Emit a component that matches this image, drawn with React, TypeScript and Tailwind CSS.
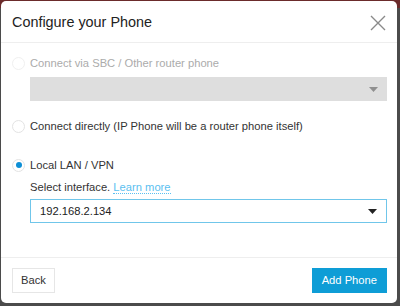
import { useState } from 'react';

const options = [
  { id: 'sbc', label: 'Connect via SBC / Other router phone', disabled: true },
  { id: 'direct', label: 'Connect directly (IP Phone will be a router phone itself)', disabled: false },
  { id: 'lan', label: 'Local LAN / VPN', disabled: false },
];

function Radio({ checked, disabled }: { checked: boolean; disabled?: boolean }) {
  return (
    <span
      className={`flex h-[13px] w-[13px] shrink-0 items-center justify-center rounded-full border ${
        disabled ? 'border-[#f0f0f0] bg-white' : 'border-[#e3e3e3] bg-white'
      }`}
    >
      {checked && <span className="h-[6px] w-[6px] rounded-full bg-[#0d8fd6]" />}
    </span>
  );
}

function Caret({ color }: { color: string }) {
  return (
    <svg width="9" height="5" viewBox="0 0 9 5" aria-hidden="true">
      <path d="M0 0h9L4.5 5z" fill={color} />
    </svg>
  );
}

export default function App() {
  const [mode, setMode] = useState('lan');

  return (
    <div className="flex h-[306px] w-[400px] flex-col bg-[linear-gradient(#6b2b2b_0,#6b2b2b_8px,#4b4b4b_8px)] pb-[3px] pl-[1px] pr-[3px] pt-[1px] font-['Liberation_Sans',Arial,sans-serif]">
      <div className="flex flex-1 flex-col rounded-[5px] bg-white">
        {/* Header */}
        <div className="flex h-[42px] items-center justify-between border-b border-[#eeeeee] pl-[11px] pr-[10px] pt-[2px]">
          <h1 className="text-[14.4px] leading-none text-[#222]">Configure your Phone</h1>
          <button className="flex h-[18px] w-[18px] items-center justify-center" aria-label="Close">
            <svg width="16" height="16" viewBox="0 0 16 16" aria-hidden="true">
              <path d="M1 1L15 15M15 1L1 15" stroke="#8a8a8a" strokeWidth="1.4" />
            </svg>
          </button>
        </div>

        {/* Body */}
        <div className="flex flex-1 flex-col pl-[11px] pr-[10px] pt-[12px] text-[11.2px] leading-[16px]">
          <label className="flex items-center gap-[5px]">
            <Radio checked={mode === 'sbc'} disabled />
            <span className="text-[#ababab]">{options[0].label}</span>
          </label>
          <div className="ml-[18px] mt-[6px] flex h-[24px] items-center justify-end bg-[#dedede] pr-[9px]">
            <Caret color="#8f8f8f" />
          </div>

          <label className="mt-[17px] flex cursor-pointer items-center gap-[5px]" onClick={() => setMode('direct')}>
            <Radio checked={mode === 'direct'} />
            <span className="text-[#333]">{options[1].label}</span>
          </label>

          <label className="mt-[23px] flex cursor-pointer items-center gap-[5px]" onClick={() => setMode('lan')}>
            <Radio checked={mode === 'lan'} />
            <span className="text-[#333]">{options[2].label}</span>
          </label>

          <div className="ml-[18px] mt-[6px] text-[#333]">
            Select interface.{' '}
            <a className="border-b border-dotted border-[#5bc0f0] text-[#5bc0f0]">Learn more</a>
          </div>
          <div className="ml-[18px] mt-[4px] flex h-[24px] items-center justify-between border border-[#70c6ea] bg-white pl-[9px] pr-[9px]">
            <span className="text-[#222]">192.168.2.134</span>
            <Caret color="#222" />
          </div>
        </div>

        {/* Footer */}
        <div className="flex h-[46px] items-center justify-between border-t border-[#eeeeee] pl-[11px] pr-[10px] text-[11.2px]">
          <button className="flex h-[25px] items-center border border-[#e6e6e6] bg-white px-[8px] text-[#333]">Back</button>
          <button className="flex h-[25px] items-center bg-[#0e9dd6] px-[10px] text-white">Add Phone</button>
        </div>
      </div>
    </div>
  );
}
